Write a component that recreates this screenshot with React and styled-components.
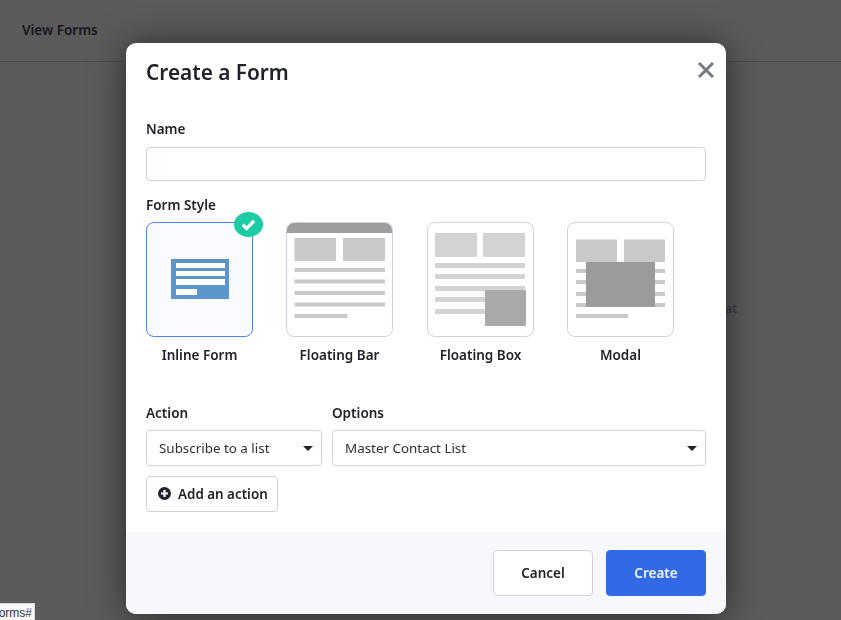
import React from "react";
import styled, { createGlobalStyle } from "styled-components";

const FONT = `"Noto Sans", "Liberation Sans", sans-serif`;

const Global = createGlobalStyle`
  html, body { margin: 0; padding: 0; height: 100%; background: #5b5b5b; overflow: hidden; }
  * { box-sizing: border-box; }
  body { font-family: ${FONT}; color: #20232b; }
`;

const Page = styled.div`
  width: 841px;
  height: 620px;
  background: #5b5b5b;
  overflow: hidden;
`;
const TopBar = styled.header`
  height: 62px;
  padding: 0 22px;
  display: flex;
  align-items: center;
  border-bottom: 1px solid #4b4b4b;
  padding-bottom: 1px;
`;
const TopTitle = styled.span`
  font-size: 13.5px;
  font-weight: 600;
  color: #17181b;
`;
const Behind = styled.div`
  display: flex;
  justify-content: flex-end;
  padding: 237px 104px 0 0;
  font-size: 13px;
  line-height: 18px;
  color: #333438;
`;
const Overlay = styled.div`
  position: fixed;
  inset: 0;
  padding: 43px 0 0 126px;
`;
const Modal = styled.section`
  width: 600px;
  height: 571px;
  background: #fff;
  border-radius: 10px;
  overflow: hidden;
  display: flex;
  flex-direction: column;
  box-shadow: 0 2px 34px rgba(0, 0, 0, 0.55);
`;
const Body = styled.div`
  flex: 1;
  padding: 0 20px;
  display: flex;
  flex-direction: column;
`;
const TitleRow = styled.div`
  height: 60px;
  display: flex;
  align-items: center;
  justify-content: space-between;
`;
const Title = styled.h1`
  margin: -3px 0 0;
  font-size: 20.8px;
  font-weight: 600;
  color: #20232b;
`;
const Close = styled.button`
  border: 0;
  background: none;
  padding: 0;
  width: 18px;
  height: 18px;
  display: block;
  margin-top: -6px;
  margin-right: -9px;
`;
const Label = styled.label`
  display: block;
  font-size: 13.5px;
  line-height: 18px;
  font-weight: 600;
  color: #20232b;
`;
const NameLabel = styled(Label)`
  margin-top: 17px;
`;
const TextInput = styled.input`
  display: block;
  width: 100%;
  height: 34px;
  margin-top: 9px;
  border: 1px solid #ccd2e0;
  border-radius: 4px;
  background: #fff;
`;
const StyleLabel = styled(Label)`
  margin-top: 15px;
`;
const Cards = styled.div`
  display: flex;
  margin-top: 8px;
`;
const CardItem = styled.div`
  width: 107px;
  margin-right: ${(p) => p.$gap}px;
  display: flex;
  flex-direction: column;
  align-items: center;
  position: relative;
`;
const Card = styled.div`
  width: 107px;
  height: 115px;
  border-radius: 8px;
  overflow: hidden;
  border: 1px solid ${(p) => (p.$active ? "#4f84ea" : "#ccd2e0")};
  background: ${(p) => (p.$active ? "#fafbff" : "#fff")};
`;
const Thumb = styled.svg`
  display: block;
  margin: -1px;
  width: 107px;
  height: 115px;
`;
const CardName = styled.div`
  margin-top: 9px;
  font-size: 13.5px;
  line-height: 18px;
  font-weight: 600;
  color: #20232b;
  white-space: nowrap;
`;
const Badge = styled.svg`
  position: absolute;
  left: 88px;
  top: -10px;
  width: 29px;
  height: 25px;
`;
const FieldRow = styled.div`
  display: grid;
  grid-template-columns: 176px 374px;
  column-gap: 10px;
  margin-top: 40px;
`;
const Field = styled.div`
  display: flex;
  flex-direction: column;
`;
const Select = styled.div`
  height: 36px;
  margin-top: 8px;
  padding: 0 8px 0 12px;
  display: flex;
  align-items: center;
  justify-content: space-between;
  border: 1px solid #ccd2e0;
  border-radius: 4px;
  background: #fff;
  font-size: 13.4px;
  color: #2c2f37;
`;
const Caret = styled.span`
  width: 0;
  height: 0;
  border-left: 5.5px solid transparent;
  border-right: 5.5px solid transparent;
  border-top: 5px solid #20232b;
`;
const AddButton = styled.button`
  align-self: flex-start;
  width: 132px;
  height: 36px;
  margin-top: 10px;
  padding: 0 0 0 11px;
  display: flex;
  align-items: center;
  gap: 7px;
  border: 1px solid #ccd2e0;
  border-radius: 4px;
  background: #fff;
  font-family: ${FONT};
  font-size: 13.4px;
  font-weight: 600;
  color: #20232b;
`;
const PlusIcon = styled.svg`
  margin-top: -2px;
  flex: none;
`;
const Footer = styled.footer`
  height: 82px;
  padding: 18px 20px;
  display: flex;
  justify-content: flex-end;
  gap: 13px;
  background: #f7f8fd;
`;
const FooterButton = styled.button`
  width: 100px;
  height: 46px;
  border-radius: 4px;
  font-family: ${FONT};
  font-size: 13.5px;
  font-weight: 600;
  border: 1px solid ${(p) => (p.$primary ? "#3269e6" : "#ccd2e0")};
  background: ${(p) => (p.$primary ? "#3269e6" : "#fff")};
  color: ${(p) => (p.$primary ? "#f2f5ff" : "#20232b")};
`;
const Status = styled.div`
  position: fixed;
  left: 0;
  bottom: 0;
  width: 35px;
  height: 17px;
  padding-right: 2px;
  display: flex;
  justify-content: flex-end;
  overflow: hidden;
  background: #f7f7f7;
  border-top: 1px solid #d8d8d8;
  border-right: 1px solid #d8d8d8;
  font-family: "Liberation Sans", sans-serif;
  font-size: 12px;
  line-height: 19px;
  color: #333;
  white-space: nowrap;
`;

const BAR = "#c9c9c9";
const LIGHT = "#d3d3d3";

const Bars = ({ x, w, ys, h = 4, fill, lastW }) =>
  ys.map((y, i) => (
    <rect key={y} x={x} y={y} width={i === ys.length - 1 && lastW ? lastW : w} height={h} fill={fill} />
  ));

const InlineThumb = () => (
  <Thumb viewBox="0 0 107 115">
    <rect x="25" y="37" width="58" height="40" fill="#5b96cb" />
    <rect x="30" y="41" width="49" height="5" fill="#fff" />
    <rect x="30" y="49" width="49" height="5" fill="#fff" />
    <rect x="30" y="57" width="49" height="6" fill="#fff" />
    <rect x="30" y="67" width="21" height="6" fill="#fff" />
  </Thumb>
);
const BarThumb = () => (
  <Thumb viewBox="0 0 107 115">
    <rect x="0" y="0" width="107" height="11" fill="#9e9e9e" />
    <rect x="8.5" y="16" width="41.5" height="23" fill={BAR} />
    <rect x="57" y="16" width="42" height="23" fill={BAR} />
    <Bars x={8.5} w={90.5} ys={[46, 57.5, 69, 80.5, 92]} fill={BAR} lastW={53} />
  </Thumb>
);
const BoxThumb = () => (
  <Thumb viewBox="0 0 107 115">
    <rect x="8" y="11" width="42" height="24" fill={LIGHT} />
    <rect x="56" y="11" width="42" height="24" fill={LIGHT} />
    <Bars x={8} w={90} ys={[41, 52, 64, 75, 87]} h={5} fill={LIGHT} />
    <rect x="58" y="68" width="41" height="36" fill="#a9a9a9" />
  </Thumb>
);
const ModalThumb = () => (
  <Thumb viewBox="0 0 107 115">
    <rect x="9" y="17.5" width="41" height="22.5" fill={BAR} />
    <rect x="57" y="17.5" width="41" height="22.5" fill={BAR} />
    <Bars x={9} w={89} ys={[47, 58, 70, 81, 92]} fill={BAR} lastW={52} />
    <rect x="19" y="40" width="69" height="45" fill="#9b9b9b" />
  </Thumb>
);

const styles = [
  { name: "Inline Form", Art: InlineThumb, gap: 33, active: true },
  { name: "Floating Bar", Art: BarThumb, gap: 34 },
  { name: "Floating Box", Art: BoxThumb, gap: 33 },
  { name: "Modal", Art: ModalThumb, gap: 0 },
];

export default function App() {
  return (
    <Page>
      <Global />
      <TopBar>
        <TopTitle>View Forms</TopTitle>
      </TopBar>
      <Behind>at</Behind>
      <Overlay>
        <Modal>
          <Body>
            <TitleRow>
              <Title>Create a Form</Title>
              <Close aria-label="Close">
                <svg width="18" height="18" viewBox="0 0 18 18">
                  <path d="M2 2 L16 16 M16 2 L2 16" stroke="#767982" strokeWidth="3" fill="none" />
                </svg>
              </Close>
            </TitleRow>
            <NameLabel>Name</NameLabel>
            <TextInput />
            <StyleLabel>Form Style</StyleLabel>
            <Cards>
              {styles.map(({ name, Art, gap, active }) => (
                <CardItem key={name} $gap={gap}>
                  <Card $active={active}>
                    <Art />
                  </Card>
                  <CardName>{name}</CardName>
                  {active && (
                    <Badge viewBox="0 0 29 25">
                      <ellipse cx="14.5" cy="12.5" rx="14.5" ry="12.5" fill="#1ccca5" />
                      <path d="M8.8 12.6 L12.6 16.4 L20 9" stroke="#fff" strokeWidth="3.2" fill="none" />
                    </Badge>
                  )}
                </CardItem>
              ))}
            </Cards>
            <FieldRow>
              <Field>
                <Label>Action</Label>
                <Select>
                  Subscribe to a list
                  <Caret />
                </Select>
              </Field>
              <Field>
                <Label>Options</Label>
                <Select>
                  Master Contact List
                  <Caret />
                </Select>
              </Field>
            </FieldRow>
            <AddButton>
              <PlusIcon width="13" height="13" viewBox="0 0 13 13">
                <circle cx="6.5" cy="6.5" r="6.5" fill="#20232b" />
                <path d="M6.5 3 V10 M3 6.5 H10" stroke="#fff" strokeWidth="2.2" />
              </PlusIcon>
              Add an action
            </AddButton>
          </Body>
          <Footer>
            <FooterButton>Cancel</FooterButton>
            <FooterButton $primary>Create</FooterButton>
          </Footer>
        </Modal>
      </Overlay>
      <Status>forms#</Status>
    </Page>
  );
}
